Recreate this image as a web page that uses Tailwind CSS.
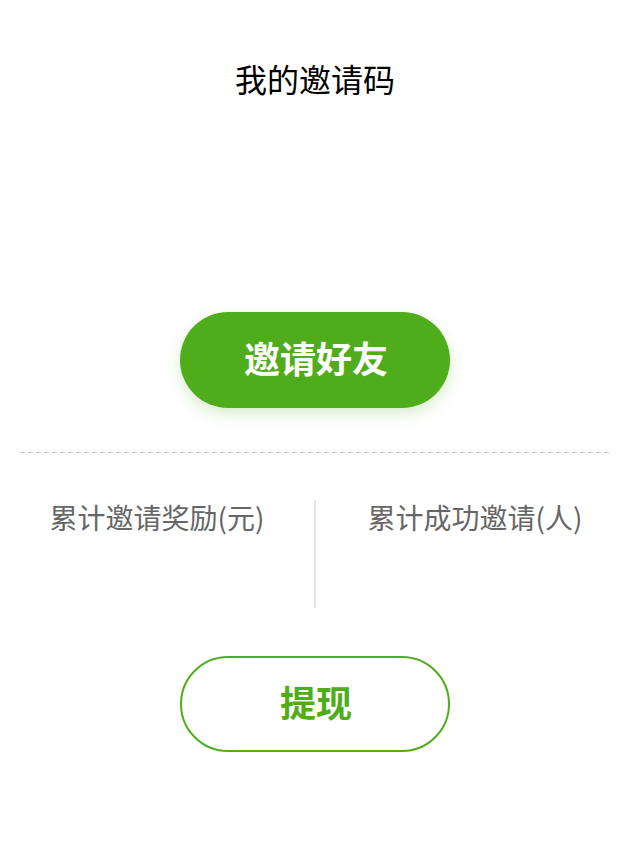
<!DOCTYPE html>
<html lang="zh-CN">
<head>
<meta charset="utf-8">
<meta name="viewport" content="width=device-width, initial-scale=1">
<title>我的邀请码</title>
<script src="https://cdn.jsdelivr.net/npm/@tailwindcss/browser@4"></script>
</head>
<body class="bg-white font-['Noto_Sans_CJK_SC',sans-serif]">
<main class="flex flex-col items-center px-5 pt-14 pb-26">
  <h1 class="text-[32px] leading-11 text-black">我的邀请码</h1>
  <div class="h-53" aria-live="polite"></div>
  <button type="button" class="h-24 w-[270px] rounded-full bg-[#4fad1b] pb-1.5 pl-0.5 text-4xl font-bold text-white shadow-[0_6px_16px_rgba(79,173,27,0.22)]">邀请好友</button>
  <svg class="mt-11 h-px w-full" aria-hidden="true"><line x1="0" y1="0.5" x2="100%" y2="0.5" stroke="#c8c8c8" stroke-dasharray="5 3"/></svg>
  <section class="mt-[47px] grid h-27 w-full grid-cols-2 text-center text-[28px] leading-[34px] text-[#666666]">
    <h2 class="border-r border-[#e5e5e5] pr-5">累计邀请奖励(元)</h2>
    <h2 class="border-l border-[#e5e5e5] pl-6">累计成功邀请(人)</h2>
  </section>
  <button type="button" class="mt-12 h-24 w-[270px] rounded-full border-2 border-[#4fad1b] bg-white pb-1.5 pl-0.5 text-4xl font-bold text-[#4fad1b]">提现</button>
</main>
</body>
</html>
